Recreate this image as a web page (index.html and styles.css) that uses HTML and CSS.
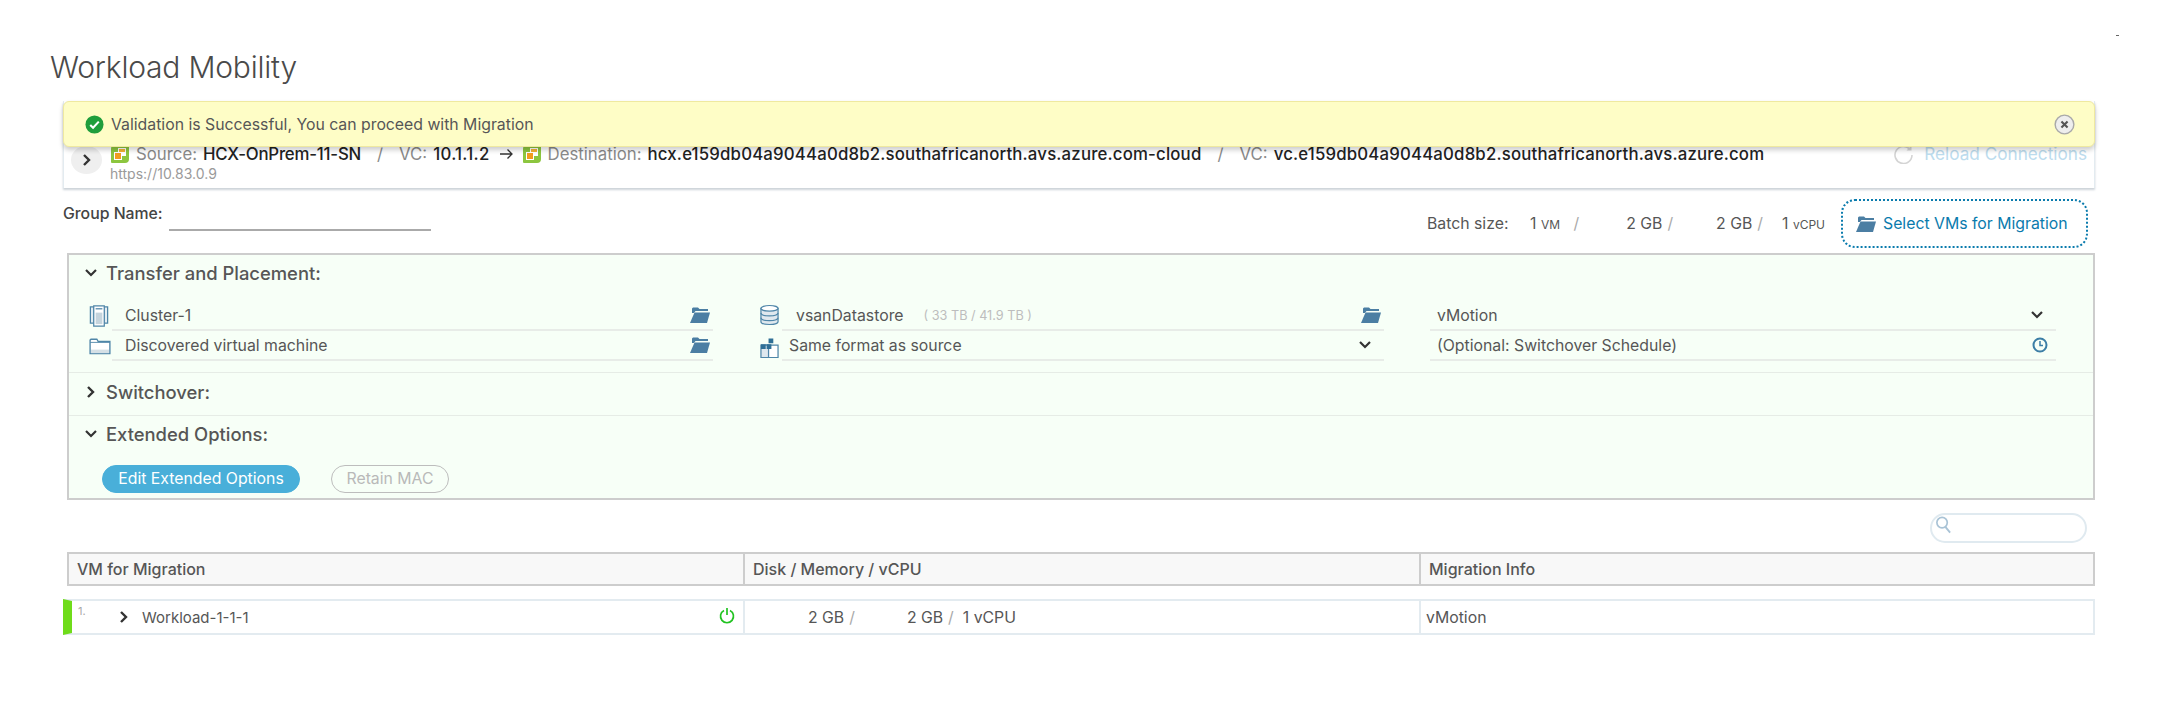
FILE: index.html
```html
<!DOCTYPE html>
<html lang="en">
<head>
  <meta charset="UTF-8">
  <title>Workload Mobility</title>
  <link rel="stylesheet" href="styles.css">
</head>
<body>
  <svg class="defs" width="0" height="0">
    <symbol id="vc" viewBox="0 0 20 20">
      <path d="M5 1h13a1 1 0 0 1 1 1v13a4 4 0 0 1-4 4H2a1 1 0 0 1-1-1V5a4 4 0 0 1 4-4z" fill="#8cc63f"/>
      <path d="M8 4h8v8h-4v4H4V8h4z" fill="#fff"/>
      <path d="M9 5h6v3H9z" fill="#f5b335"/>
      <path d="M5 9h6v6H5z" fill="#f29c1f"/>
    </symbol>
    <symbol id="folder-open" viewBox="0 0 20 18">
      <path d="M2 7V2.500L3 1.500h5l1.500 1.500H18v2H5.500L4 7z" fill="#4b7ea3"/>
      <path d="M4.500 6.500H20L17 17H0z" fill="#4b7ea3"/>
    </symbol>
    <symbol id="chev-down" viewBox="0 0 14 10">
      <path d="M2 2l5 5 5-5" fill="none" stroke="#333" stroke-width="2.200"/>
    </symbol>
    <symbol id="chev-right" viewBox="0 0 10 14">
      <path d="M2 2l5 5-5 5" fill="none" stroke="#333" stroke-width="2.400"/>
    </symbol>
  </svg>

  <div class="corner-mark"></div>
  <h1 class="page-title">Workload Mobility</h1>

  <div class="top-area">
    <div class="alert">
      <svg class="alert-check" viewBox="0 0 20 20" width="19" height="19">
        <circle cx="10" cy="10" r="9.500" fill="#1f9e3c"/>
        <path d="M5.500 10.500l3 3 6-6.500" fill="none" stroke="#fff" stroke-width="2.200"/>
      </svg>
      <span class="alert-text">Validation is Successful, You can proceed with Migration</span>
      <svg class="alert-close" viewBox="0 0 22 22" width="21" height="21">
        <circle cx="11" cy="11" r="9.800" fill="#eee" stroke="#a9a9a9" stroke-width="1.500"/>
        <path d="M7.800 7.800l6.400 6.400M14.200 7.800l-6.400 6.400" stroke="#555" stroke-width="2.200"/>
      </svg>
    </div>

    <div class="conn-card">
      <span class="conn-toggle"><svg width="10" height="14"><use href="#chev-right"/></svg></span>
      <div class="conn-info">
        <div class="conn-line">
          <svg class="vc-icon" width="20" height="20"><use href="#vc"/></svg>
          <span class="muted src-label">Source:</span>
          <b class="src-name">HCX-OnPrem-11-SN</b>
          <span class="muted slash">/</span>
          <span class="muted vc-label">VC:</span>
          <b class="src-vc">10.1.1.2</b>
          <svg class="arrow" viewBox="0 0 14 12" width="14" height="12"><path d="M0 6h12M7.500 1.500L12 6l-4.500 4.500" fill="none" stroke="#333" stroke-width="1.300"/></svg>
          <svg class="vc-icon" width="20" height="20"><use href="#vc"/></svg>
          <span class="muted dest-label">Destination:</span>
          <b class="dest-name">hcx.e159db04a9044a0d8b2.southafricanorth.avs.azure.com-cloud</b>
          <span class="muted slash">/</span>
          <span class="muted vc-label">VC:</span>
          <b class="dest-vc">vc.e159db04a9044a0d8b2.southafricanorth.avs.azure.com</b>
        </div>
        <div class="conn-url">https://10.83.0.9</div>
      </div>
      <div class="reload">
        <svg viewBox="0 0 20 20" width="20" height="20"><path d="M16 5.500A8.500 8.500 0 1 0 18 11" fill="none" stroke="#d4d4d4" stroke-width="1.600"/><path d="M17.500 1.500v5h-5z" fill="#d4d4d4"/></svg>
        <span>Reload Connections</span>
      </div>
    </div>
  </div>

  <div class="group-row">
    <span class="group-label">Group Name:</span>
    <span class="group-input"></span>
    <div class="batch">
      <span class="batch-label">Batch size:</span>
      <span class="b-vm">1 <small>VM</small></span>
      <span class="b-slash s1">/</span>
      <span class="b-mem1">2 GB</span>
      <span class="b-slash">/</span>
      <span class="b-mem2">2 GB</span>
      <span class="b-slash">/</span>
      <span class="b-cpu">1 <small>vCPU</small></span>
    </div>
    <div class="select-btn">
      <svg width="20" height="18"><use href="#folder-open"/></svg>
      <span>Select VMs for Migration</span>
    </div>
  </div>

  <section class="panel">
    <div class="panel-sec sec-transfer">
      <div class="sec-head">
        <svg class="chev" width="14" height="10"><use href="#chev-down"/></svg>
        <span>Transfer and Placement:</span>
      </div>
      <div class="placement">
        <div class="field f-left">
          <svg class="field-icon" viewBox="0 0 20 24" width="20" height="23">
            <path d="M1 3h4v17H1zM15 3h4v17h-4z" fill="#e3edf2" stroke="#4f86a8" stroke-width="1.300"/>
            <path d="M4.500 2h11v21h-11z" fill="#fff" stroke="#4f86a8" stroke-width="1.300"/>
            <path d="M6.500 9h7v12h-7z" fill="#c5d4dd"/>
            <path d="M6.500 5h7" stroke="#4f86a8" stroke-width="1.300"/>
          </svg>
          <span class="field-text">Cluster-1</span>
          <svg class="field-end" width="20" height="18"><use href="#folder-open"/></svg>
        </div>
        <div class="field f-mid">
          <svg class="field-icon" viewBox="0 0 20 22" width="19" height="22">
            <path d="M1 4v14c0 4 18 4 18 0V4z" fill="#dfe8ee" stroke="#4f86a8" stroke-width="1.300"/>
            <ellipse cx="10" cy="4" rx="9" ry="3" fill="#fff" stroke="#4f86a8" stroke-width="1.300"/>
            <path d="M1 9c0 4 18 4 18 0M1 14c0 4 18 4 18 0" fill="none" stroke="#4f86a8" stroke-width="1.300"/>
          </svg>
          <span class="field-text ds-name">vsanDatastore</span>
          <span class="ds-size">( 33 TB / 41.9 TB )</span>
          <svg class="field-end" width="20" height="18"><use href="#folder-open"/></svg>
        </div>
        <div class="field f-right">
          <span class="field-text">vMotion</span>
          <svg class="field-end chev-end" width="14" height="10"><use href="#chev-down"/></svg>
        </div>
        <div class="field f-left">
          <svg class="field-icon icon-low" viewBox="0 0 24 20" width="22" height="18">
            <path d="M1 3.500V18.500h22V5H10L8.500 2.500H2z" fill="#fff" stroke="#4f86a8" stroke-width="1.500"/>
            <path d="M2 14h20v4H2z" fill="#d5e0e6"/>
            <path d="M1 6h22" stroke="#4f86a8"/>
          </svg>
          <span class="field-text">Discovered virtual machine</span>
          <svg class="field-end" width="20" height="18"><use href="#folder-open"/></svg>
        </div>
        <div class="field f-mid">
          <svg class="field-icon icon-low" viewBox="0 0 20 22" width="19" height="22">
            <path d="M6 8h13v13H6z" fill="#fff" stroke="#4f86a8" stroke-width="1.300"/>
            <path d="M1 8h8v13H1z" fill="#dfe8ee" stroke="#4f86a8" stroke-width="1.300"/>
            <path d="M1 7h5v5H1zM7 7h5v5H7zM9 1h5v5H9z" fill="#2f6f96"/>
          </svg>
          <span class="field-text fmt-text">Same format as source</span>
          <svg class="field-end chev-end" width="14" height="10"><use href="#chev-down"/></svg>
        </div>
        <div class="field f-right">
          <span class="field-text">(Optional: Switchover Schedule)</span>
          <svg class="field-end clock" viewBox="0 0 16 16" width="16" height="16">
            <circle cx="8" cy="8" r="6.500" fill="none" stroke="#3c7ea6" stroke-width="2"/>
            <path d="M8 4v4.500h3" fill="none" stroke="#3c7ea6" stroke-width="1.500"/>
          </svg>
        </div>
      </div>
    </div>
    <div class="panel-sec sec-switch">
      <div class="sec-head">
        <svg class="chev" width="14" height="14"><use href="#chev-right" x="2" width="10" height="14"/></svg>
        <span>Switchover:</span>
      </div>
    </div>
    <div class="panel-sec sec-ext">
      <div class="sec-head">
        <svg class="chev" width="14" height="10"><use href="#chev-down"/></svg>
        <span>Extended Options:</span>
      </div>
      <div class="ext-btns">
        <span class="pill pill-on">Edit Extended Options</span>
        <span class="pill pill-off">Retain MAC</span>
      </div>
    </div>
  </section>

  <div class="search-row">
    <div class="search">
      <svg viewBox="0 0 18 20" width="17" height="19"><circle cx="7.500" cy="8" r="5.500" fill="none" stroke="#a9c3d6" stroke-width="1.800"/><path d="M11 12.500l5 6" stroke="#a9c3d6" stroke-width="2"/></svg>
    </div>
  </div>

  <div class="grid-head">
    <div class="col c1">VM for Migration</div>
    <div class="col c2">Disk / Memory / vCPU</div>
    <div class="col c3">Migration Info</div>
  </div>

  <div class="grid-row">
    <div class="col c1">
      <span class="row-num">1.</span>
      <svg class="row-chev" width="10" height="14"><use href="#chev-right"/></svg>
      <span class="vm-name">Workload-1-1-1</span>
      <svg class="power" viewBox="0 0 16 17" width="16" height="17">
        <path d="M5 3.500a6.500 6.500 0 1 0 6 0" fill="none" stroke="#22c322" stroke-width="1.700"/>
        <path d="M8 1v7" stroke="#22c322" stroke-width="1.700"/>
      </svg>
    </div>
    <div class="col c2">
      <span class="d-disk">2 GB</span><span class="d-slash">/</span>
      <span class="d-mem">2 GB</span><span class="d-slash">/</span>
      <span class="d-cpu">1 vCPU</span>
    </div>
    <div class="col c3">vMotion</div>
  </div>
</body>
</html>
```

FILE: styles.css
```css
body {
  margin: 0;
  font-family: Inter, "Noto Sans", sans-serif;
  font-size: 15.8px;
  color: #565656;
  background-color: white;
  position: relative;
}
.defs {
  position: absolute;
}
.corner-mark {
  position: absolute;
  left: 2116px;
  top: 35px;
  width: 3px;
  height: 1px;
  background-color: #666;
}
.page-title {
  margin: 0;
  padding: 49px 0 0 50px;
  height: 52px;
  font-size: 30px;
  line-height: 36px;
  font-weight: 300;
  letter-spacing: -0.2px;
  color: #4a4a4a;
}

/* alert sits over the connection card */
.top-area {
  position: relative;
  margin: 0 0 0 63px;
  width: 2032px;
  height: 87px;
}
.alert {
  position: absolute;
  z-index: 2;
  left: 0;
  top: 0;
  right: 0;
  height: 46px;
  box-sizing: border-box;
  display: flex;
  align-items: center;
  padding: 0 19px 0 21px;
  background-color: #fefdc6;
  border: 1px solid #efe9a0;
  border-radius: 6px;
  box-shadow: 0 3px 5px rgba(0, 0, 0, 0.2);
}
.alert-text {
  margin-left: 7px;
  flex: 1;
}
.conn-card {
  height: 87px;
  box-sizing: border-box;
  display: flex;
  padding: 43px 7px 0 7px;
  background-color: white;
  border-left: 1px solid #e3ebf0;
  border-right: 1px solid #e3ebf0;
  box-shadow: 0 2px 2px #cdd4d9;
}
.conn-toggle {
  width: 31px;
  height: 28px;
  margin-top: 2px;
  border-radius: 50%;
  background-color: #efefef;
  display: flex;
  align-items: center;
  justify-content: center;
}
.conn-info {
  margin-left: 8px;
  flex: 1;
}
.conn-line {
  display: flex;
  align-items: center;
  height: 20px;
  white-space: nowrap;
  color: #222;
  font-size: 16.8px;
}
.conn-line b {
  font-weight: 500;
}
.muted {
  color: #8a8a8a;
}
.vc-icon {
  flex: none;
}
.src-label, .dest-label {
  margin-left: 6px;
}
.src-name, .src-vc, .dest-name, .dest-vc {
  margin-left: 6px;
}
.src-name {
  letter-spacing: -0.2px;
}
.src-vc {
  letter-spacing: 0.3px;
}
.dest-name, .dest-vc {
  letter-spacing: 0.18px;
}
.slash {
  margin: 0 16px;
}
.arrow {
  margin: 0 8px 0 10px;
}
.conn-url {
  margin-top: 1px;
  font-size: 14px;
  color: #9a9a9a;
}
.reload {
  display: flex;
  align-items: flex-start;
  color: #bcdcee;
  font-size: 17.2px;
  height: 20px;
}
.reload span {
  margin-left: 10px;
  margin-top: -1px;
}

.group-row {
  display: flex;
  align-items: center;
  margin: 11px 0 0 63px;
  width: 2025px;
  height: 49px;
}
.group-label {
  font-weight: 500;
  color: #444;
  width: 106px;
  font-size: 15.8px;
  white-space: nowrap;
  margin-top: -20px;
}
.group-input {
  width: 262px;
  height: 32px;
  border-bottom: 2px solid #aaa;
  box-sizing: border-box;
  align-self: flex-start;
}
.batch {
  margin-left: auto;
  display: flex;
  align-items: center;
  width: 398px;
  white-space: nowrap;
}
.batch small {
  font-size: 12px;
}
.batch-label {
  width: 109px;
}
.b-vm {
  width: 46px;
}
.b-slash {
  color: #aaa;
  margin-left: 5px;
}
.b-slash.s1 {
  margin-left: 0;
}
.b-mem1 {
  margin-left: 47px;
}
.b-mem2 {
  margin-left: 43px;
}
.b-cpu {
  margin-left: 19px;
}
.select-btn {
  width: 247px;
  height: 49px;
  margin-left: 16px;
  box-sizing: border-box;
  display: flex;
  align-items: center;
  padding-left: 13px;
  color: #0a7bad;
  border: 2px dotted #0a7bad;
  border-radius: 14px;
}
.select-btn span {
  margin-left: 7px;
}

.panel {
  margin: 5px 0 0 67px;
  width: 2028px;
  height: 247px;
  box-sizing: border-box;
  background-color: #f7fff7;
  border: 2px solid #cdcdcd;
}
.panel-sec {
  box-sizing: border-box;
  border-bottom: 1px solid #e6ece6;
  padding-left: 15px;
}
.sec-transfer {
  height: 118px;
}
.sec-switch {
  height: 43px;
}
.sec-ext {
  border-bottom: none;
}
.sec-head {
  display: flex;
  align-items: center;
  height: 36px;
  font-size: 18.4px;
  font-weight: 500;
  color: #565656;
}
.sec-switch .sec-head {
  height: 38px;
}
.sec-ext .sec-head {
  height: 36px;
}
.chev {
  margin-right: 8px;
}
.placement {
  display: grid;
  grid-template-columns: 671px 675px 626px;
  grid-auto-rows: 30px;
  margin-top: 10px;
}
.field {
  position: relative;
  display: flex;
  align-items: center;
  box-sizing: border-box;
  height: 30px;
  padding-bottom: 2px;
  padding-left: 41px;
  width: 629px;
}
.f-right {
  padding-left: 7px;
  width: 626px;
}
.field::after {
  content: "";
  position: absolute;
  bottom: 0;
  height: 2px;
  right: 0;
  background-color: #e8ece8;
}
.f-left::after {
  left: 28px;
}
.f-mid::after {
  left: 27px;
}
.f-right::after {
  left: 0;
}
.field-icon {
  position: absolute;
  left: 5px;
  top: 3px;
}
.icon-low {
  top: 6px;
}
.field-end {
  margin-left: auto;
  margin-right: 3px;
}
.chev-end {
  margin-right: 12px;
}
.clock {
  margin-right: 8px;
}
.ds-size {
  margin-left: 20px;
  font-size: 12.7px;
  color: #bdbdbd;
}
.fmt-text {
  margin-left: -7px;
}
.ext-btns {
  display: flex;
  gap: 31px;
  margin: 13px 0 0 18px;
}
.pill {
  box-sizing: border-box;
  height: 28px;
  line-height: 26px;
  border-radius: 14px;
  text-align: center;
}
.pill-on {
  width: 198px;
  background-color: #49afd9;
  color: white;
  border: 1px solid #49afd9;
}
.pill-off {
  width: 118px;
  color: #b9b9b9;
  border: 1px solid #bdbdbd;
}

.search-row {
  display: flex;
  justify-content: flex-end;
  width: 2087px;
  margin-top: 13px;
}
.search {
  width: 157px;
  height: 30px;
  box-sizing: border-box;
  border: 2px solid #e0eaf0;
  border-radius: 15px;
  padding-left: 3px;
}
.grid-head {
  display: flex;
  margin: 9px 0 0 67px;
  width: 2028px;
  height: 34px;
  box-sizing: border-box;
  background-color: #f8f8f8;
  border: 2px solid #cdcdcd;
  font-size: 16px;
  font-weight: 500;
  color: #565656;
}
.grid-head .col {
  line-height: 30px;
  padding-left: 8px;
  box-sizing: border-box;
}
.col.c1 {
  width: 674px;
}
.col.c2 {
  width: 676px;
  border-left: 2px solid #cdcdcd;
}
.col.c3 {
  flex: 1;
  border-left: 2px solid #cdcdcd;
}
.grid-row {
  display: flex;
  margin: 13px 0 0 63px;
  width: 2032px;
  height: 36px;
  box-sizing: border-box;
  border: 2px solid #e3ebf0;
  border-left: 9px solid #6fdc1a;
}
.grid-row .col {
  box-sizing: border-box;
  display: flex;
  align-items: center;
  position: relative;
  border-color: #e3ebf0;
}
.grid-row .col.c1 {
  width: 671px;
}
.row-num {
  position: absolute;
  left: 6px;
  top: 3px;
  font-size: 11px;
  color: #a8a8a8;
}
.row-chev {
  margin-left: 47px;
}
.vm-name {
  margin-left: 13px;
  font-size: 15px;
}
.power {
  position: absolute;
  right: 8px;
  top: 6px;
}
.d-disk {
  margin-left: 63px;
}
.d-slash {
  margin-left: 5px;
  color: #aaa;
}
.d-mem {
  margin-left: 52px;
}
.d-cpu {
  margin-left: 9px;
}
.grid-row .c3 {
  padding-left: 5px;
}
```
